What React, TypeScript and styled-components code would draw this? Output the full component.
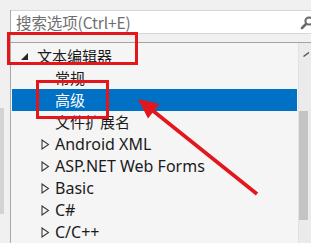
import styled, { createGlobalStyle } from 'styled-components'

const GlobalStyle = createGlobalStyle`
	html, body {
		margin: 0;
		padding: 0;
		background: #f0f0f0;
	}
	* {
		box-sizing: border-box;
	}
`

const Page = styled.div`
	position: relative;
	width: 311px;
	height: 243px;
	overflow: hidden;
	display: flex;
	background: #f0f0f0;
	font-family: 'Noto Sans CJK SC', 'Noto Sans', sans-serif;
`
const LeftStrip = styled.div`
	width: 10px;
	flex-shrink: 0;
	display: flex;
	flex-direction: column;
	padding-top: 108px;
`
const StripBar = styled.div`
	width: 4px;
	height: 106px;
	background: #d3d3d3;
`
const Main = styled.div`
	flex: 1;
	margin-top: 10px;
	border-left: 1px solid #a9a9a9;
	display: flex;
	flex-direction: column;
	min-width: 0;
`
const SearchBox = styled.div`
	position: relative;
	height: 26px;
	background: #fff;
	border-top: 1px solid #d6d6d6;
	border-bottom: 1px solid #d6d6d6;
	display: flex;
	align-items: center;
	padding-left: 5px;
	font-size: 15.5px;
	color: #6f6f6f;
	letter-spacing: -0.1px;
`
const SearchIcon = styled.svg`
	position: absolute;
	right: -1px;
	top: 5px;
`
const Panel = styled.div`
	flex: 1;
	margin-top: 8px;
	border-top: 1px solid #a3a3a3;
	background: #f5f5f5;
	display: flex;
`
const Tree = styled.div`
	flex: 1;
	padding: 2px 1px 0 1px;
	display: flex;
	flex-direction: column;
`
const Row = styled.div<{ $level: number; $selected?: boolean }>`
	height: 22px;
	flex-shrink: 0;
	display: flex;
	align-items: center;
	padding-left: ${(p) => 7 + p.$level * 18}px;
	background: ${(p) => (p.$selected ? '#0071c5' : 'transparent')};
	color: ${(p) => (p.$selected ? '#ffffff' : '#1b1b1b')};
	font-size: 15px;
	white-space: nowrap;
`
const Expander = styled.span`
	width: 18px;
	height: 22px;
	flex-shrink: 0;
	display: flex;
	align-items: center;
`
const Label = styled.span<{ $latin?: boolean }>`
	font-family: ${(p) =>
		p.$latin
			? "'Noto Sans', 'Noto Sans CJK SC', sans-serif"
			: "'Noto Sans CJK SC', sans-serif"};
	font-size: ${(p) => (p.$latin ? '16px' : '15px')};
	line-height: 22px;
`
const Scrollbar = styled.div`
	width: 13px;
	flex-shrink: 0;
	border-left: 1px solid #e2e2e2;
	background: #ebebeb;
	display: flex;
	flex-direction: column;
`
const ArrowButton = styled.div`
	height: 22px;
	display: flex;
	align-items: center;
	justify-content: center;
	padding-left: 2px;
`
const Thumb = styled.div<{ $top: number; $height: number }>`
	margin-top: ${(p) => p.$top}px;
	width: 9px;
	height: ${(p) => p.$height}px;
	background: #c4c4c4;
`
const Overlay = styled.svg`
	position: absolute;
	left: 0;
	top: 0;
	pointer-events: none;
`

const ExpandedArrow = () => (
	<svg width="10" height="10" viewBox="0 0 10 10" style={{ marginLeft: 1, marginTop: 2 }}>
		<polygon points="8,1 8,8 1,8" fill="#262626" />
	</svg>
)

const CollapsedArrow = () => (
	<svg width="10" height="11" viewBox="0 0 10 11" style={{ marginLeft: 4 }}>
		<polygon points="1,1 7.5,5.5 1,10" fill="none" stroke="#3a3a3a" strokeWidth="1.1" />
	</svg>
)

type Item = { label: string; level: number; expand?: 'open' | 'closed'; selected?: boolean; latin?: boolean }

const items: Item[] = [
	{ label: '文本编辑器', level: 0, expand: 'open' },
	{ label: '常规', level: 1 },
	{ label: '高级', level: 1, selected: true },
	{ label: '文件扩展名', level: 1 },
	{ label: 'Android XML', level: 1, expand: 'closed', latin: true },
	{ label: 'ASP.NET Web Forms', level: 1, expand: 'closed', latin: true },
	{ label: 'Basic', level: 1, expand: 'closed', latin: true },
	{ label: 'C#', level: 1, expand: 'closed', latin: true },
	{ label: 'C/C++', level: 1, expand: 'closed', latin: true },
]

const App = () => {
	return (
		<Page>
			<GlobalStyle />
			<LeftStrip>
				<StripBar />
			</LeftStrip>
			<Main>
				<SearchBox>
					搜索选项(Ctrl+E)
					<SearchIcon width="12" height="14" viewBox="0 0 12 14">
						<circle cx="9" cy="5" r="3.6" fill="none" stroke="#6a6a6a" strokeWidth="2" />
						<line x1="6.3" y1="7.8" x2="2" y2="12" stroke="#6a6a6a" strokeWidth="2.6" strokeLinecap="round" />
					</SearchIcon>
				</SearchBox>
				<Panel>
					<Tree>
						{items.map((item) => (
							<Row key={item.label} $level={item.level} $selected={item.selected}>
								<Expander>
									{item.expand === 'open' && <ExpandedArrow />}
									{item.expand === 'closed' && <CollapsedArrow />}
								</Expander>
								<Label $latin={item.latin}>{item.label}</Label>
							</Row>
						))}
					</Tree>
					<Scrollbar>
						<ArrowButton>
							<svg width="7" height="5" viewBox="0 0 7 5">
								<polyline points="0.5,4.5 6,0.5" fill="none" stroke="#555" strokeWidth="1.4" />
							</svg>
						</ArrowButton>
						<Thumb $top={46} $height={109} />
					</Scrollbar>
				</Panel>
			</Main>
			{/* red annotation marks */}
			<Overlay width="311" height="243" viewBox="0 0 311 243">
				<rect x="8.5" y="33.5" width="128" height="30" fill="none" stroke="#e3161c" strokeWidth="3" />
				<rect x="37.5" y="81.5" width="70" height="36" fill="none" stroke="#e3161c" strokeWidth="3" />
				<line x1="257" y1="194" x2="152" y2="110" stroke="#e3161c" strokeWidth="3.6" />
				<polygon points="138,99 159.5,104 148,118.5" fill="#e3161c" />
			</Overlay>
		</Page>
	)
}

export default App
